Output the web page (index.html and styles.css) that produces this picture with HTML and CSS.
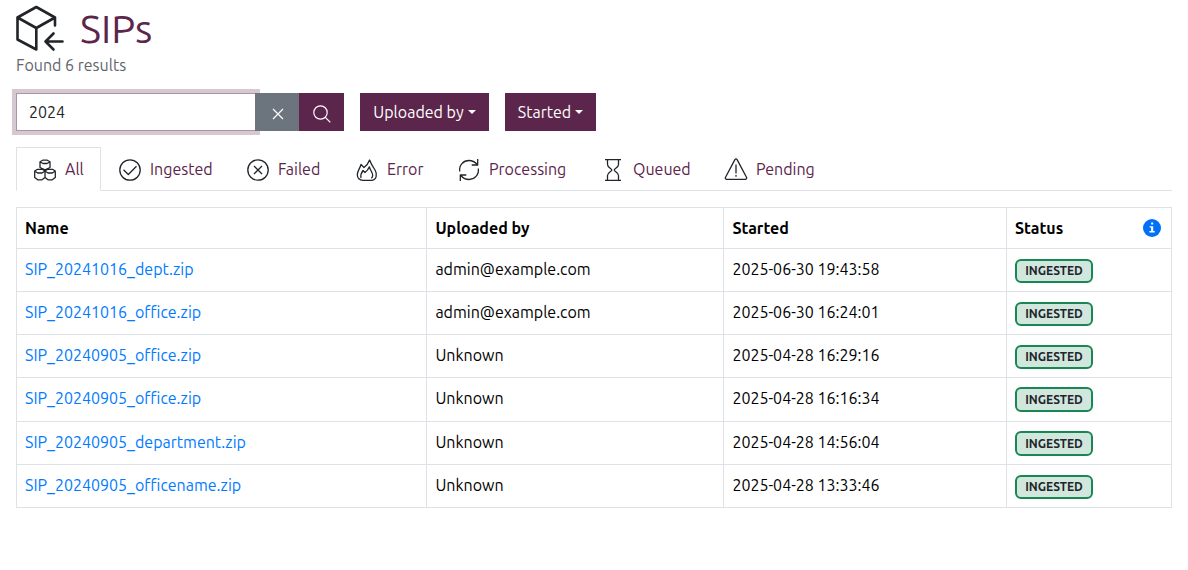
FILE: index.html
```html
<!DOCTYPE html>
<html lang="en">
<head>
<meta charset="utf-8">
<title>SIPs</title>
<link rel="stylesheet" href="styles.css">
</head>
<body>
<main class="page">
  <h1 class="title">
    <svg class="title-icon" viewBox="0 0 48 48" fill="none" stroke="currentColor" stroke-width="2.6" stroke-linecap="round" stroke-linejoin="round"><path d="M20.300 45.500V24L1.500 13.500V35.500L20.300 45.500M1.500 13.500L20.300 3L39 13.500V21.500M39 13.500L20.300 24"/><path d="M46.500 37.500H29.500M37.500 29.500L29.500 37.500L37.500 45.500"/></svg>
    <span class="title-text">SIPs</span>
  </h1>
  <p class="found">Found 6 results</p>
  <div class="toolbar">
    <div class="search">
      <input class="search-input" type="text" value="2024" aria-label="Search">
      <button class="btn btn-clear" aria-label="Clear"><svg width="12" height="12" viewBox="0 0 12 12" fill="none" stroke="currentColor" stroke-width="1.200"><path d="M1 1L11 11M11 1L1 11"/></svg></button>
      <button class="btn btn-find" aria-label="Search"><svg width="18" height="18" viewBox="0 0 18 18" fill="none" stroke="currentColor" stroke-width="1.200"><circle cx="7.500" cy="7.500" r="6.700"/><path d="M12.300 12.300L17.300 17.300"/></svg></button>
    </div>
    <button class="btn btn-drop drop-user"><span>Uploaded by</span><i class="caret"></i></button>
    <button class="btn btn-drop drop-started"><span>Started</span><i class="caret"></i></button>
  </div>
  <nav class="tabs">
    <a class="tab tab-all active"><svg class="tab-icon" viewBox="0 0 24 24"><path d="M7 3.700L9.700 2.200H14.300L17 3.700V9.500L12 11.800L7 9.500ZM7 3.700L10 5.500H14L17 3.700M1.700 13L4.500 11.300H9.300L12 13V19.500L9 21.800H4.700L1.700 19.500ZM1.700 13L4.700 15H9L12 13L15 15H19.300L22.300 13L19.500 11.300H14.700L12 13M12 19.500L15 21.800H19.300L22.300 19.500V13"/></svg><span>All</span></a>
    <a class="tab tab-ingested"><svg class="tab-icon" viewBox="0 0 24 24"><circle cx="12" cy="12" r="10.200"/><path d="M5.500 11.800L10.300 16.500L18.500 8.300"/></svg><span>Ingested</span></a>
    <a class="tab tab-failed"><svg class="tab-icon" viewBox="0 0 24 24"><circle cx="12" cy="12" r="10.200"/><path d="M8 8L16 16M16 8L8 16"/></svg><span>Failed</span></a>
    <a class="tab tab-error"><svg class="tab-icon" viewBox="0 0 24 24"><path d="M8 22.300C4.500 22.300 2.300 20 2.300 16.500C2.300 13 4.800 11 6 6.500L9 9.500C11 8 13.500 5 14.600 2C16 6 18 9 20 12C22.800 16.500 21.500 22.300 16 22.300ZM6 20C5.300 17 6.500 14.500 8 12.500L10 14.500C12 13 13.500 11 14.400 8.800C15 12 17.800 14.500 17.700 17.500C17.700 18.800 17 19.700 16.300 20.200"/></svg><span>Error</span></a>
    <a class="tab tab-processing"><svg class="tab-icon" viewBox="0 0 24 24"><path d="M2.700 13.500C1.800 7 6.500 2.500 12 2.500C15.500 2.500 18 4 20 6.300M20.700 1V7H14.700M21.300 10.500C22.200 17 17.500 21.500 12 21.500C8.500 21.500 6 20 4 17.700M3.300 23V17H9.300"/></svg><span>Processing</span></a>
    <a class="tab tab-queued"><svg class="tab-icon" viewBox="0 0 24 24"><path d="M4 1.700H20M4 22.300H20M6.500 1.700V6.500C6.500 9.500 10.800 10.500 10.800 12C10.800 13.500 6.500 14.500 6.500 17.500V22.300M17.500 1.700V6.500C17.500 9.500 13.200 10.500 13.200 12C13.200 13.500 17.500 14.500 17.500 17.500V22.300"/></svg><span>Queued</span></a>
    <a class="tab tab-pending"><svg class="tab-icon" viewBox="0 0 24 24"><path d="M10.900 1.600Q12 .2 13.100 1.600L22.600 19.500Q23 21 21.500 21.300H2.500Q1 21 1.400 19.500ZM12 6.500V15.500M12 17V18.800"/></svg><span>Pending</span></a>
  </nav>
  <table class="grid">
    <colgroup><col class="col-name"><col class="col-user"><col class="col-started"><col class="col-status"></colgroup>
    <thead><tr><th>Name</th><th>Uploaded by</th><th>Started</th><th><div class="status-head"><span>Status</span><svg width="18" height="18" viewBox="0 0 18 18"><circle cx="9" cy="9" r="9" fill="#0070f8"/><path d="M8.200 3.600H10.200V5.600H8.200ZM6.600 7.200H10.200V12H11.700V13.400H6.400V12H8.100V8.600H6.600Z" fill="#fff"/></svg></div></th></tr></thead>
    <tbody>
      <tr><td><a class="file">SIP_20241016_dept.zip</a></td><td>admin@example.com</td><td>2025-06-30 19:43:58</td><td><span class="badge">INGESTED</span></td></tr>
      <tr><td><a class="file">SIP_20241016_office.zip</a></td><td>admin@example.com</td><td>2025-06-30 16:24:01</td><td><span class="badge">INGESTED</span></td></tr>
      <tr><td><a class="file">SIP_20240905_office.zip</a></td><td>Unknown</td><td>2025-04-28 16:29:16</td><td><span class="badge">INGESTED</span></td></tr>
      <tr class="tall"><td><a class="file">SIP_20240905_office.zip</a></td><td>Unknown</td><td>2025-04-28 16:16:34</td><td><span class="badge badge-tall">INGESTED</span></td></tr>
      <tr><td><a class="file">SIP_20240905_department.zip</a></td><td>Unknown</td><td>2025-04-28 14:56:04</td><td><span class="badge badge-tall">INGESTED</span></td></tr>
      <tr><td><a class="file">SIP_20240905_officename.zip</a></td><td>Unknown</td><td>2025-04-28 13:33:46</td><td><span class="badge">INGESTED</span></td></tr>
    </tbody>
  </table>
</main>
</body>
</html>
```
FILE: styles.css
```css
* { box-sizing: border-box; }
body {
  margin: 0;
  background: #fff;
  color: #212529;
  font: 16px/24px Ubuntu, "Noto Sans", sans-serif;
}
.page { padding: 4px 16px 0; }
.title {
  display: flex;
  align-items: center;
  gap: 16px;
  height: 48px;
  margin: 0;
  font-size: 40px;
  font-weight: 400;
  line-height: 48px;
}
.title-icon { width: 48px; height: 48px; }
.title-text { padding-top: 2px; color: #5c254b; }
.found { margin: 1px 0 16px; color: #5f666d; }
.toolbar { display: flex; gap: 16px; }
.search { display: flex; width: 328px; height: 38px; }
.search-input {
  width: 240px;
  padding: 0 12px;
  border: 1px solid #ae92a5;
  outline: 0;
  box-shadow: 0 0 0 4px #d6c8d2;
  color: #212529;
  font: inherit;
}
.btn {
  display: flex;
  align-items: center;
  justify-content: center;
  height: 38px;
  padding: 0;
  border: 0;
  background: #5c254b;
  color: #fff;
  font: inherit;
  z-index: 1;
}
.btn svg { margin: 3px 0 0 1px; }
.btn-clear { width: 44px; margin-left: -1px; background: #6c757d; }
.btn-find { width: 45px; }
.btn-drop { gap: 4px; }
.drop-user { width: 129px; }
.drop-started { width: 91px; }
.caret { border: 4px solid transparent; border-top-color: #fff; border-bottom: 0; }
.tabs { display: flex; height: 44px; margin-top: 16px; border-bottom: 1px solid #dee2e6; }
.tab {
  display: flex;
  align-items: center;
  gap: 8px;
  height: 44px;
  padding: 0 0 0 17px;
  color: #5c254b;
  white-space: nowrap;
}
.tab-icon {
  flex: none;
  width: 24px;
  height: 24px;
  margin-top: 2px;
  fill: none;
  stroke: #212529;
  stroke-width: 1.3;
  stroke-linejoin: round;
}
.active { padding-left: 16px; border: 1px solid #dee2e6; border-bottom-color: #fff; background: #fff; }
.tab-all { width: 85px; }
.tab-ingested { width: 128px; }
.tab-failed { width: 109px; }
.tab-error { width: 102px; }
.tab-processing { width: 144px; }
.tab-queued { width: 123px; }
.grid {
  width: 1156px;
  margin-top: 16px;
  border-collapse: collapse;
  table-layout: fixed;
  color: #000;
}
.col-name { width: 410px; }
.col-user { width: 297px; }
.col-started { width: 283px; }
.grid th, .grid td { height: 43px; padding: 0 8px; border: 1px solid #dee2e6; text-align: left; }
.grid td { padding-bottom: 2px; }
.grid th { height: 41px; font-weight: 600; }
.grid .tall td { height: 44px; padding-bottom: 3px; }
.grid td:nth-child(2), .grid th:nth-child(2),
.grid td:nth-child(3), .grid th:nth-child(3) { padding-left: 8.4px; }
.status-head { display: flex; align-items: center; justify-content: space-between; padding-right: 2px; }
.file { color: #007bff; }
.badge {
  display: flex;
  align-items: center;
  justify-content: center;
  width: 78px;
  height: 24px;
  margin-top: 4px;
  border: 2px solid #198754;
  border-radius: 6px;
  background: #d1e7dd;
  color: #212529;
  font-size: 12px;
  font-weight: 700;
}
.badge-tall { height: 25px; margin-top: 3px; }
```
